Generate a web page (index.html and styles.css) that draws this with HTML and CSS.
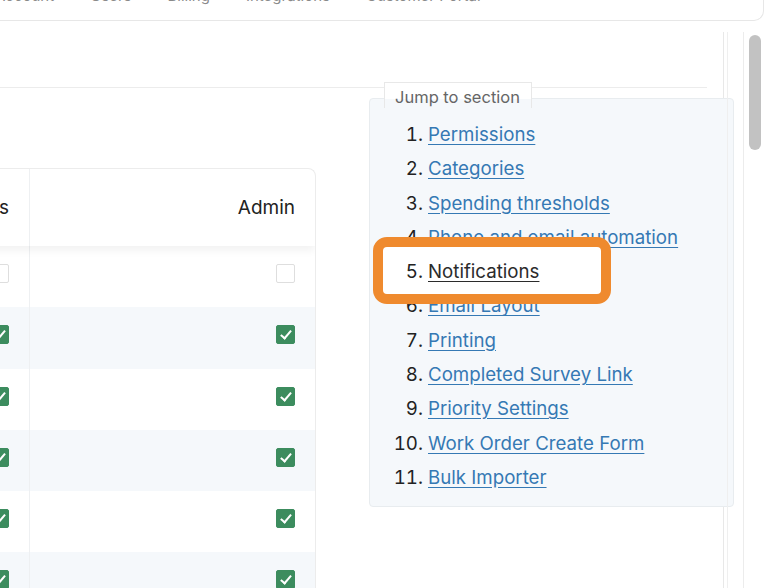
FILE: index.html
```html
<!DOCTYPE html>
<html lang="en">
<head>
    <meta charset="UTF-8">
    <title>Settings</title>
    <link rel="stylesheet" href="styles.css">
</head>
<body>
    <div class="topbar">
        <nav class="tabs">
            <a>Account</a>
            <a>Users</a>
            <a>Billing</a>
            <a>Integrations</a>
            <a>Customer Portal</a>
        </nav>
    </div>

    <div class="frame">
        <main class="panel">
            <div class="panel-head"></div>

            <div class="panel-body">
                <div class="perm-card">
                    <table class="perm-table">
                        <thead>
                            <tr>
                                <th class="col-a">Requesters</th>
                                <th class="col-b">Technicians</th>
                                <th class="col-c">Admin</th>
                            </tr>
                        </thead>
                        <tbody>
                            <tr>
                                <td class="col-a"><span class="check"></span></td>
                                <td class="col-b"><span class="check"></span></td>
                                <td class="col-c"><span class="check"></span></td>
                            </tr>
                            <tr>
                                <td class="col-a"><span class="check on"></span></td>
                                <td class="col-b"><span class="check on"></span></td>
                                <td class="col-c"><span class="check on"></span></td>
                            </tr>
                            <tr>
                                <td class="col-a"><span class="check on"></span></td>
                                <td class="col-b"><span class="check on"></span></td>
                                <td class="col-c"><span class="check on"></span></td>
                            </tr>
                            <tr>
                                <td class="col-a"><span class="check on"></span></td>
                                <td class="col-b"><span class="check on"></span></td>
                                <td class="col-c"><span class="check on"></span></td>
                            </tr>
                            <tr>
                                <td class="col-a"><span class="check on"></span></td>
                                <td class="col-b"><span class="check on"></span></td>
                                <td class="col-c"><span class="check on"></span></td>
                            </tr>
                            <tr>
                                <td class="col-a"><span class="check on"></span></td>
                                <td class="col-b"><span class="check on"></span></td>
                                <td class="col-c"><span class="check on"></span></td>
                            </tr>
                        </tbody>
                    </table>
                </div>

                <aside class="jump">
                    <div class="jump-tab">Jump to section</div>
                    <div class="jump-box">
                        <ol>
                            <li><a href="#permissions">Permissions</a></li>
                            <li><a href="#categories">Categories</a></li>
                            <li><a href="#thresholds">Spending thresholds</a></li>
                            <li><a href="#automation">Phone and email automation</a></li>
                            <li class="current"><a href="#notifications">Notifications</a></li>
                            <li><a href="#email-layout">Email Layout</a></li>
                            <li><a href="#printing">Printing</a></li>
                            <li><a href="#survey">Completed Survey Link</a></li>
                            <li><a href="#priority">Priority Settings</a></li>
                            <li><a href="#wo-form">Work Order Create Form</a></li>
                            <li><a href="#importer">Bulk Importer</a></li>
                        </ol>
                    </div>
                </aside>
            </div>
        </main>
        <div class="gutter"></div>
        <div class="scrolltrack"><div class="thumb"></div></div>
    </div>
</body>
</html>
```

FILE: styles.css
```css
html, body {
    margin: 0;
    height: 100%;
}
body {
    font-family: Inter, "Liberation Sans", sans-serif;
    background-color: #fff;
    color: #222;
    overflow: hidden;
}

/* top navigation card, scrolled mostly out of view */
.topbar {
    height: 20px;
    margin-left: -10px;
    margin-right: 10px;
    border: 1px solid #e7e7e7;
    border-top: none;
    border-radius: 0 0 10px 10px;
    overflow: hidden;
}
.tabs {
    display: flex;
    gap: 36px;
    margin-top: -12px;
    padding-left: 4px;
    font-size: 15px;
    line-height: 16px;
    color: #8a8a8a;
}

.frame {
    display: flex;
    margin-top: 11px;
    height: 556px;
}
.panel {
    width: 723px;
    flex-shrink: 0;
    border-right: 1px solid #e8e8e8;
}
.gutter {
    width: 15px;
    border-left: 1px solid #efefef;
    margin-left: 3px;
}
.scrolltrack {
    flex: 1;
    border-left: 1px solid #ececec;
    padding: 3px 0 0 5px;
}
.thumb {
    width: 12px;
    height: 115px;
    background-color: #c2c2c2;
    border-radius: 6px;
}

.panel-head {
    height: 55px;
    margin-right: 16px;
    border-bottom: 1px solid #ececec;
}
.panel-body {
    display: flex;
    align-items: flex-start;
}

/* permissions table */
.perm-card {
    flex-shrink: 0;
    width: 554px;
    margin-left: -240px;
    margin-top: 80px;
    border: 1px solid #ececec;
    border-bottom: none;
    border-radius: 0 8px 0 0;
    overflow: hidden;
}
.perm-table {
    width: 100%;
    border-collapse: separate;
    border-spacing: 0;
    table-layout: fixed;
}
.perm-table .col-a {
    width: 110px;
}
.perm-table .col-b {
    width: 118px;
}
.perm-table .col-c {
    border-left: 1px solid #eef0f2;
}
.perm-table th,
.perm-table td {
    padding: 0 20px 0 0;
    text-align: right;
}
.perm-table thead {
    box-shadow: 0 5px 8px rgba(0, 0, 0, 0.05);
    position: relative;
}
.perm-table th {
    height: 77px;
    font-size: 19px;
    font-weight: normal;
    color: #222;
}
.perm-table td {
    height: 61.25px;
}
.perm-table tbody tr:nth-child(even) td {
    background-color: #f5f8fb;
}
.check {
    display: inline-block;
    width: 19px;
    height: 19px;
    margin-bottom: 6px;
    vertical-align: middle;
    box-sizing: border-box;
    border: 1px solid #dedede;
    border-radius: 2px;
    background-color: #fff;
    position: relative;
}
.check.on {
    border-color: #3c8c5e;
    background-color: #3c8c5e;
}
.check.on::after {
    content: "";
    position: absolute;
    left: 6px;
    top: 2px;
    width: 4px;
    height: 9px;
    border: solid #fff;
    border-width: 0 2.5px 2.5px 0;
    transform: rotate(40deg);
}

/* jump to section box */
.jump {
    flex-shrink: 0;
    width: 365px;
    margin-left: 53px;
    margin-top: -6px;
    margin-right: -10px;
}
.jump-tab {
    display: block;
    width: fit-content;
    position: relative;
    z-index: 1;
    margin-left: 15px;
    margin-bottom: -10px;
    padding: 0 11px 0 10px;
    height: 25px;
    line-height: 29px;
    font-size: 16.5px;
    color: #666;
    border: 1px solid #e8e8e8;
    border-bottom: none;
    background: linear-gradient(to bottom, #fff 0, #fff 16px, #f5f8fb 16px);
}
.jump-box {
    background-color: #f5f8fb;
    border: 1px solid #e8ecef;
    border-radius: 4px;
    padding: 19px 0 11px;
}
.jump-box ol {
    margin: 0;
    padding-left: 58px;
    font-size: 18.7px;
    line-height: 34.3px;
    color: #222;
}
.jump-box a {
    color: #3579b4;
    text-decoration: underline;
    text-underline-offset: 3px;
}
.jump-box li.current {
    position: relative;
    z-index: 1;
}
.jump-box li.current a {
    color: #2b2b2b;
}
.jump-box li.current::before {
    content: "";
    position: absolute;
    z-index: -1;
    left: -55px;
    top: -18px;
    width: 238px;
    height: 67px;
    box-sizing: border-box;
    border: 10px solid #ef8a2e;
    border-radius: 14px;
    background-color: #fff;
}
```
